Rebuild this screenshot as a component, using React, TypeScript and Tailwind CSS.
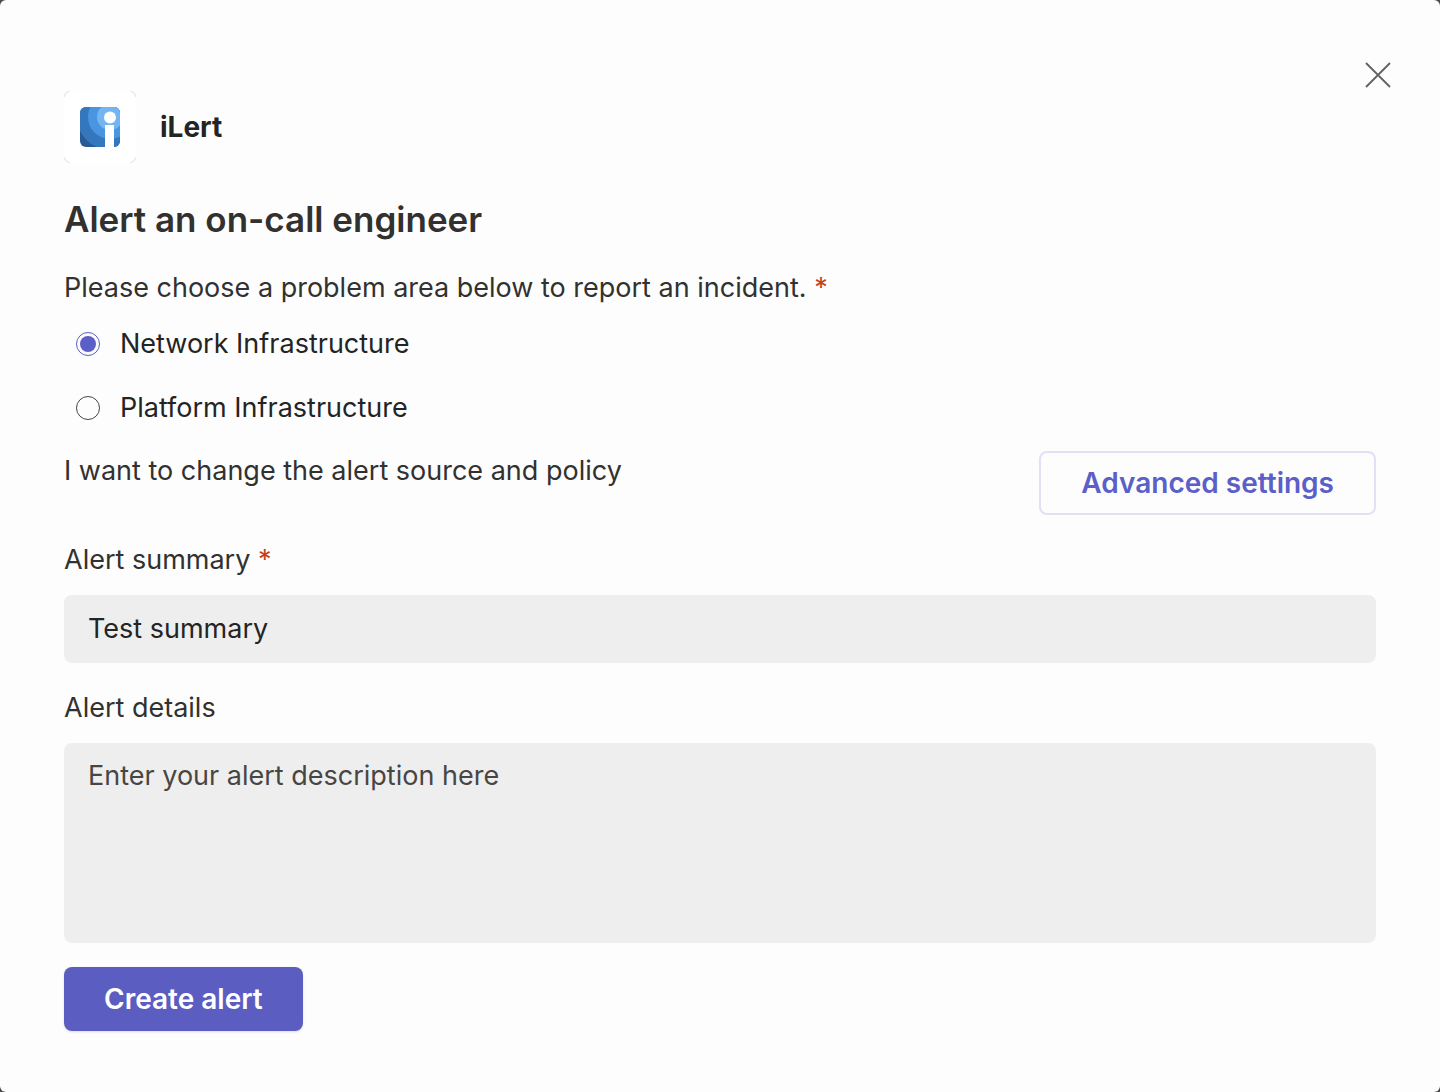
import { useState } from "react";

const areas = ["Network Infrastructure", "Platform Infrastructure"];

function Required() {
  return <span aria-hidden="true" className="text-[#c4421a]">*</span>;
}

function Logo() {
  return (
    <svg viewBox="0 0 72 72" className="size-[72px]" role="img" aria-label="iLert logo">
      <defs>
        <clipPath id="tile"><rect x="16" y="16" width="40" height="40" rx="6" /></clipPath>
      </defs>
      <rect width="72" height="72" rx="8" fill="#fff" />
      <path d="M0 6Q1 1 6 0M66 0Q71 1 72 6M72 66Q71 71 66 72M6 72Q1 71 0 66" fill="none" stroke="#d3e2f4" strokeWidth="1" />
      <g clipPath="url(#tile)">
        <rect x="16" y="16" width="40" height="40" fill="#285a94" />
        <circle cx="46" cy="26" r="33" fill="#3577bd" />
        <circle cx="46" cy="26" r="22" fill="#4995e2" />
        <circle cx="46" cy="26" r="13" fill="#74b5f1" />
        <circle cx="46" cy="26.5" r="6" fill="#fff" />
        <path d="M41 34h9v23h-9z" fill="#fff" />
      </g>
    </svg>
  );
}

export default function App() {
  const [area, setArea] = useState(areas[0]);
  const [summary, setSummary] = useState("Test summary");
  return (
    <div className="min-h-screen bg-[#4a4a4a] font-['Inter',sans-serif] text-[27px] leading-9 text-[#323130]">
      <main className="relative min-h-screen rounded-md bg-[#fdfdfd] px-16 pt-[91px] pb-[61px]">
        <button type="button" aria-label="Close" className="absolute top-[59px] right-[46px] flex size-8 items-center justify-center">
          <svg viewBox="0 0 26 26" className="size-[26px]" fill="none" stroke="#616161" strokeWidth="1.8"><path d="M1 1l24 24M25 1L1 25" /></svg>
        </button>
        <header className="flex items-center gap-6">
          <Logo />
          <span className="text-[28px] font-bold text-[#242424]">iLert</span>
        </header>
        <form onSubmit={(e) => e.preventDefault()}>
          <h1 className="mt-8 text-[35px] leading-12 font-semibold">Alert an on-call engineer</h1>
          <fieldset className="pt-[27px]">
            <legend className="contents">Please choose a problem area below to report an incident. <Required /></legend>
            <div className="mt-5 flex flex-col gap-7 px-3 text-[#242424]">
              {areas.map((a) => (
                <label key={a} className="flex items-center gap-5">
                  <input type="radio" name="area" checked={area === a} onChange={() => setArea(a)} className="size-6 appearance-none rounded-full border border-[#484644] bg-clip-content p-[3px] checked:border-[#5b5fc7] checked:bg-[#5b5fc7]" />
                  {a}
                </label>
              ))}
            </div>
          </fieldset>
          <div className="mt-[25px] flex items-start justify-between">
            <p className="pt-0.5">I want to change the alert source and policy</p>
            <button type="button" className="h-16 rounded-lg border-2 border-[#e2e0f4] px-10 text-[28px] font-semibold text-[#5b5fc7]">Advanced settings</button>
          </div>
          <label htmlFor="summary" className="mt-[27px] block">Alert summary <Required /></label>
          <input id="summary" required value={summary} onChange={(e) => setSummary(e.target.value)} className="mt-[17px] block h-[68px] w-full rounded-lg bg-[#eeeeee] px-6 pb-0.5 text-[#242424]" />
          <label htmlFor="details" className="mt-[27px] block">Alert details</label>
          <textarea id="details" placeholder="Enter your alert description here" className="mt-[17px] block h-[200px] w-full resize-none rounded-lg bg-[#eeeeee] px-6 py-[15px] placeholder:text-[#484644]" />
          <button type="submit" className="mt-6 h-16 rounded-lg bg-[#5c5dc0] px-10 text-[28px] font-semibold text-white shadow-sm">Create alert</button>
        </form>
      </main>
    </div>
  );
}
